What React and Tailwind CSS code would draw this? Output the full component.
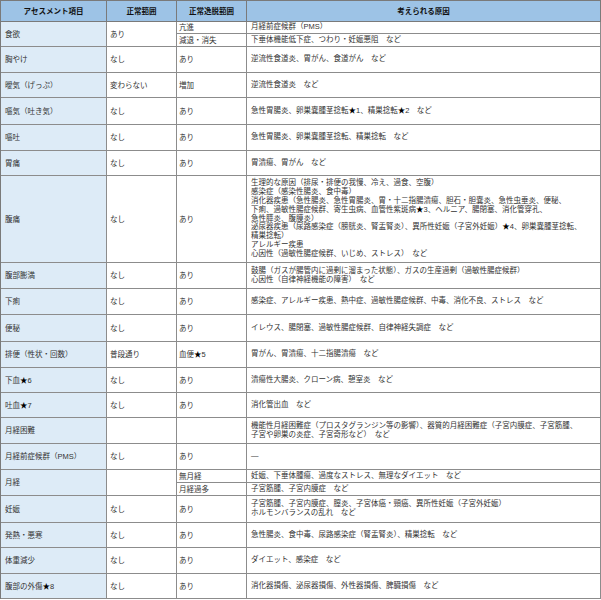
import React from "react";

const S = () => <span className="text-black">★</span>;

function C1({ children }) {
  return (
    <div className="flex items-center border-r border-b border-[#8c8c8c] bg-[#ddebf7] pl-[4px] text-[#333] whitespace-nowrap overflow-hidden">
      {children}
    </div>
  );
}
function C2({ children, className = "" }) {
  return (
    <div className={"flex items-center border-r border-b border-[#8c8c8c] bg-white pl-[3px] text-[#333] whitespace-nowrap overflow-hidden " + className}>
      {children}
    </div>
  );
}
function C3({ children, className = "" }) {
  return (
    <div className={"flex items-center border-r border-b border-[#8c8c8c] bg-white pl-[2px] text-[#333] whitespace-nowrap overflow-hidden " + className}>
      {children}
    </div>
  );
}
function C4({ children }) {
  return (
    <div className="flex items-center border-r border-b border-[#8c8c8c] bg-white pl-[4px] text-[#333] whitespace-nowrap overflow-hidden">
      <div className="leading-[8.9px]">{children}</div>
    </div>
  );
}
function H({ children }) {
  return (
    <div className="flex items-center justify-center border-r border-b border-[#7a7a7a] bg-[#9dc3e6] font-bold text-[#111]">
      {children}
    </div>
  );
}

export default function App() {
  return (
    <div className="w-[601px] h-[600px] bg-white font-['Liberation_Sans','Noto_Sans_CJK_JP',sans-serif] text-[7.5px] leading-[9px]">
      <div className="grid w-[601px] grid-cols-[106px_70px_70px_354px] grid-rows-[21px_12px_13px_26px_25px_27px_26px_25px_87px_26px_26px_27px_26px_25px_25px_26px_26px_13px_13px_27px_25px_26px_25px] border-l border-t border-[#7a7a7a]">
        <H>アセスメント項目</H>
        <H>正常範囲</H>
        <H>正常逸脱範囲</H>
        <H>考えられる原因</H>

        <div className="row-span-2 flex items-center border-r border-b border-[#8c8c8c] bg-[#ddebf7] pl-[4px] text-[#333]">食欲</div>
        <div className="row-span-2 flex items-center border-r border-b border-[#8c8c8c] bg-white pl-[3px] text-[#333]">あり</div>
        <C3>亢進</C3>
        <C4>月経前症候群（PMS）</C4>
        <C3>減退・消失</C3>
        <C4>下垂体機能低下症、つわり・妊娠悪阻　など</C4>

        <C1>胸やけ</C1>
        <C2>なし</C2>
        <C3>あり</C3>
        <C4>逆流性食道炎、胃がん、食道がん　など</C4>

        <C1>曖気（げっぷ）</C1>
        <C2>変わらない</C2>
        <C3>増加</C3>
        <C4>逆流性食道炎　など</C4>

        <C1>嘔気（吐き気）</C1>
        <C2>なし</C2>
        <C3>あり</C3>
        <C4>急性胃腸炎、卵巣嚢腫茎捻転<S />1、精巣捻転<S />2　など</C4>

        <C1>嘔吐</C1>
        <C2>なし</C2>
        <C3>あり</C3>
        <C4>急性胃腸炎、卵巣嚢腫茎捻転、精巣捻転　など</C4>

        <C1>胃痛</C1>
        <C2>なし</C2>
        <C3>あり</C3>
        <C4>胃潰瘍、胃がん　など</C4>

        <C1>腹痛</C1>
        <C2>なし</C2>
        <C3>あり</C3>
        <C4>
          生理的な原因（排尿・排便の我慢、冷え、過食、空腹）<br />
          感染症（感染性腸炎、食中毒）<br />
          消化器疾患（急性腸炎、急性胃腸炎、胃・十二指腸潰瘍、胆石・胆嚢炎、急性虫垂炎、便秘、<br />
          下痢、過敏性腸症候群、寄生虫病、血管性紫斑病<S />3、ヘルニア、腸閉塞、消化管穿孔、<br />
          急性膵炎、腹膜炎）<br />
          泌尿器疾患（尿路感染症（膀胱炎、腎盂腎炎）、異所性妊娠（子宮外妊娠）<S />4、卵巣嚢腫茎捻転、<br />
          精巣捻転）<br />
          アレルギー疾患<br />
          心因性（過敏性腸症候群、いじめ、ストレス）　など
        </C4>

        <C1>腹部膨満</C1>
        <C2>なし</C2>
        <C3>あり</C3>
        <C4>
          鼓腸（ガスが腸管内に過剰に溜まった状態）、ガスの生産過剰（過敏性腸症候群）<br />
          心因性（自律神経機能の障害）　など
        </C4>

        <C1>下痢</C1>
        <C2>なし</C2>
        <C3>あり</C3>
        <C4>感染症、アレルギー疾患、熱中症、過敏性腸症候群、中毒、消化不良、ストレス　など</C4>

        <C1>便秘</C1>
        <C2>なし</C2>
        <C3>あり</C3>
        <C4>イレウス、腸閉塞、過敏性腸症候群、自律神経失調症　など</C4>

        <C1>排便（性状・回数）</C1>
        <C2>普段通り</C2>
        <C3>血便<S />5</C3>
        <C4>胃がん、胃潰瘍、十二指腸潰瘍　など</C4>

        <C1>下血<S />6</C1>
        <C2>なし</C2>
        <C3>あり</C3>
        <C4>潰瘍性大腸炎、クローン病、憩室炎　など</C4>

        <C1>吐血<S />7</C1>
        <C2>なし</C2>
        <C3>あり</C3>
        <C4>消化管出血　など</C4>

        <C1>月経困難</C1>
        <C2></C2>
        <C3></C3>
        <C4>
          機能性月経困難症（プロスタグランジン等の影響）、器質的月経困難症（子宮内膜症、子宮筋腫、<br />
          子宮や卵巣の炎症、子宮奇形など）　など
        </C4>

        <C1>月経前症候群（PMS）</C1>
        <C2>なし</C2>
        <C3>あり</C3>
        <C4>—</C4>

        <div className="row-span-2 flex items-center border-r border-b border-[#8c8c8c] bg-[#ddebf7] pl-[4px] text-[#333]">月経</div>
        <div className="row-span-2 flex items-center border-r border-b border-[#8c8c8c] bg-white pl-[3px] text-[#333]"></div>
        <C3>無月経</C3>
        <C4>妊娠、下垂体腫瘍、過度なストレス、無理なダイエット　など</C4>
        <C3>月経過多</C3>
        <C4>子宮筋腫、子宮内膜症　など</C4>

        <C1>妊娠</C1>
        <C2>なし</C2>
        <C3>あり</C3>
        <C4>
          子宮筋腫、子宮内膜症、膣炎、子宮体癌・頸癌、異所性妊娠（子宮外妊娠）<br />
          ホルモンバランスの乱れ　など
        </C4>

        <C1>発熱・悪寒</C1>
        <C2>なし</C2>
        <C3>あり</C3>
        <C4>急性腸炎、食中毒、尿路感染症（腎盂腎炎）、精巣捻転　など</C4>

        <C1>体重減少</C1>
        <C2>なし</C2>
        <C3>あり</C3>
        <C4>ダイエット、感染症　など</C4>

        <C1>腹部の外傷<S />8</C1>
        <C2>なし</C2>
        <C3>あり</C3>
        <C4>消化器損傷、泌尿器損傷、外性器損傷、脾臓損傷　など</C4>
      </div>
    </div>
  );
}
